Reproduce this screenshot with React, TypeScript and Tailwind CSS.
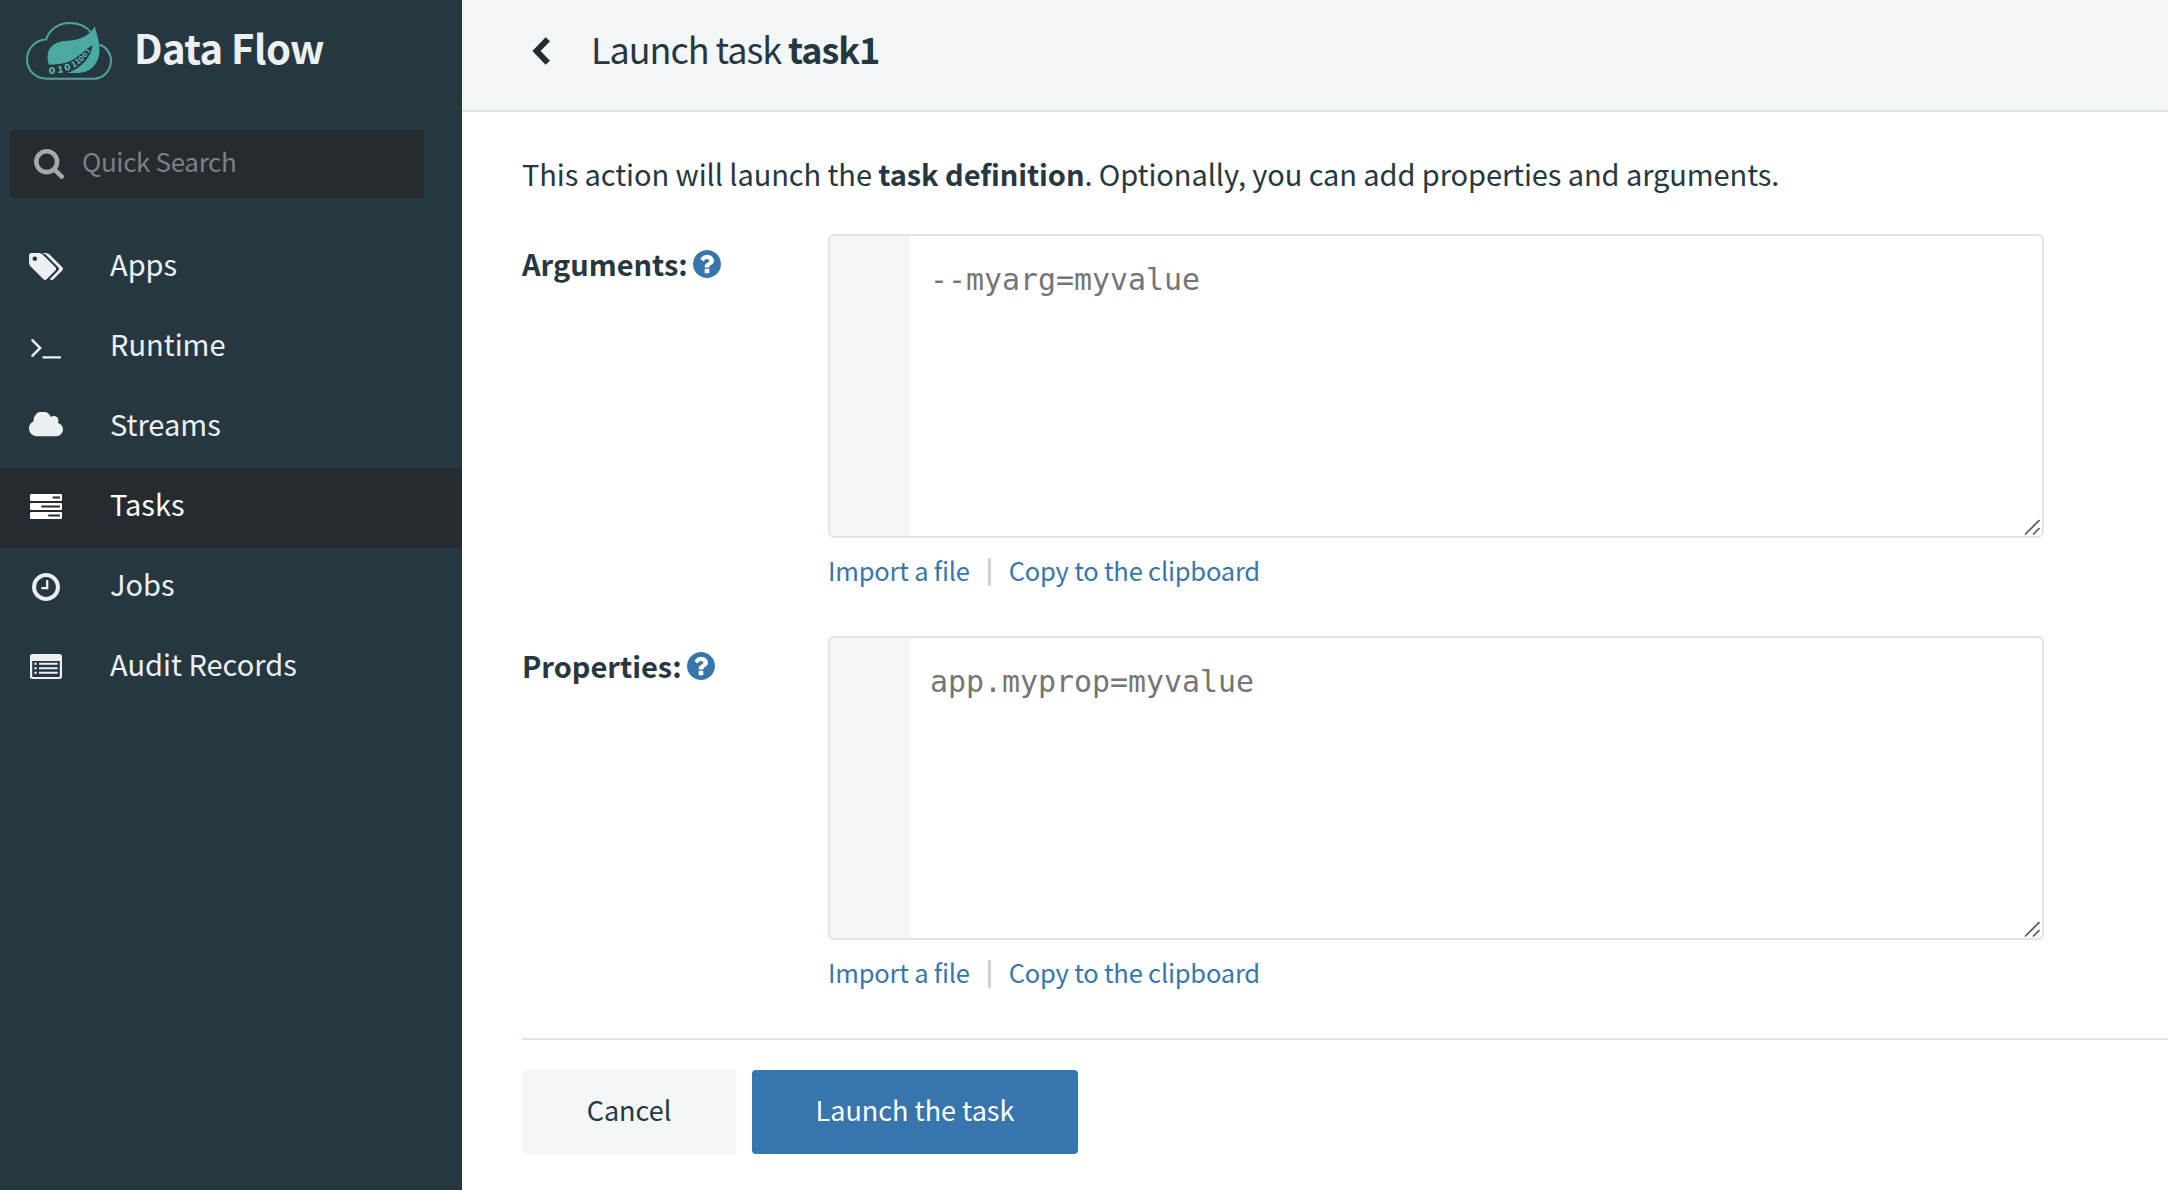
import React from "react";

const sans = "font-['Noto_Sans_CJK_SC','Source_Sans_Pro',sans-serif]";

type IconProps = { d: string; viewBox: string; className: string };

function Icon({ d, viewBox, className }: IconProps) {
  return (
    <svg viewBox={viewBox} className={className} fill="currentColor" fillRule="evenodd" aria-hidden="true">
      <path d={d} />
    </svg>
  );
}

const SEARCH =
  "M1152 704q0-185-131.500-316.500t-316.500-131.500-316.500 131.500-131.500 316.500 131.500 316.500 316.500 131.500 316.500-131.500 131.500-316.500zm512 832q0 52-38 90t-90 38q-54 0-90-38l-343-342q-179 124-399 124-143 0-273.500-55.500t-225-150-150-225-55.500-273.500 55.500-273.500 150-225 225-150 273.500-55.500 273.500 55.500 225 150 150 225 55.500 273.500q0 220-124 399l343 343q37 37 37 90z";
const TAGS =
  "M448 448q0-53-37.500-90.500t-90.500-37.500-90.500 37.500-37.500 90.500 37.500 90.500 90.500 37.500 90.500-37.500 37.500-90.500zm1067 576q0 53-37 90l-491 492q-39 37-91 37-53 0-90-37l-715-716q-38-37-64.500-101t-26.500-117v-416q0-52 38-90t90-38h416q53 0 117 26.500t102 64.500l715 714q37 39 37 91zm384 0q0 53-37 90l-491 492q-39 37-91 37-36 0-59-14t-53-45l470-470q37-37 37-90 0-52-37-91l-715-714q-38-38-102-64.500t-117-26.500h224q53 0 117 26.500t102 64.500l715 714q37 39 37 91z";
const TERMINAL =
  "M585 983l-466 466q-10 10-23 10t-23-10l-50-50q-10-10-10-23t10-23l393-393-393-393q-10-10-10-23t10-23l50-50q10-10 23-10t23 10l466 466q10 10 10 23t-10 23zm1079 457v64q0 14-9 23t-23 9h-960q-14 0-23-9t-9-23v-64q0-14 9-23t23-9h960q14 0 23 9t9 23z";
const CLOUD =
  "M1920 1152q0 159-112.500 271.500t-271.500 112.500h-1088q-185 0-316.500-131.500t-131.500-316.500q0-132 71-241.500t187-163.500q-2-28-2-43 0-212 150-362t362-150q158 0 286.500 88t187.500 230q70-62 166-62 106 0 181 75t75 181q0 75-41 138 129 30 213 134.500t84 239.500z";
const CLOCK =
  "M896 544v448q0 14-9 23t-23 9h-320q-14 0-23-9t-9-23v-64q0-14 9-23t23-9h224v-352q0-14 9-23t23-9h64q14 0 23 9t9 23zm416 352q0-148-73-273t-198-198-273-73-273 73-198 198-73 273 73 273 198 198 273 73 273-73 198-198 73-273zm224 0q0 209-103 385.500t-279.500 279.500-385.500 103-385.500-103-279.500-279.500-103-385.500 103-385.500 279.500-279.500 385.500-103 385.500 103 279.500 279.500 103 385.500z";
const QUESTION =
  "M896 1376v-192q0-14-9-23t-23-9h-192q-14 0-23 9t-9 23v192q0 14 9 23t23 9h192q14 0 23-9t9-23zm256-672q0-88-55.500-163t-138.500-116-170-41q-243 0-371 213-15 24 8 42l132 100q7 6 19 6 16 0 25-12 53-68 86-92 34-24 86-24 48 0 85.500 26t37.500 59q0 38-20 61t-68 45q-63 28-115.500 86.500t-52.500 125.500v36q0 14 9 23t23 9h192q14 0 23-9t9-23q0-19 21.500-49.500t54.500-49.500q32-18 49-28.500t46-35 44.500-48 28-60.500 12.500-81zm384 192q0 209-103 385.500t-279.500 279.500-385.500 103-385.500-103-279.500-279.500-103-385.500 103-385.500 279.500-279.500 385.500-103 385.500 103 279.500 279.500 103 385.500z";

function TasksIcon() {
  return (
    <svg viewBox="0 0 32 25" className="h-[25px] w-8" fill="currentColor" fillRule="evenodd">
      <path d="M1 0h30a1 1 0 0 1 1 1v5a1 1 0 0 1-1 1H1a1 1 0 0 1-1-1V1a1 1 0 0 1 1-1zM22.700 2.600h7.300v2h-7.300z" />
      <path d="M1 9h30a1 1 0 0 1 1 1v5a1 1 0 0 1-1 1H1a1 1 0 0 1-1-1v-5a1 1 0 0 1 1-1zM11.300 11.600H30v2H11.300z" />
      <path d="M1 18h30a1 1 0 0 1 1 1v5a1 1 0 0 1-1 1H1a1 1 0 0 1-1-1v-5a1 1 0 0 1 1-1zM18.300 20.600H30v2H18.300z" />
    </svg>
  );
}

function RecordsIcon() {
  return (
    <svg viewBox="0 0 32 25" className="h-[25px] w-8" fill="currentColor" fillRule="evenodd">
      <path d="M2.500 0h27A2.500 2.500 0 0 1 32 2.500v20a2.500 2.500 0 0 1-2.500 2.500h-27A2.500 2.500 0 0 1 0 22.500v-20A2.500 2.500 0 0 1 2.500 0zM2.200 7v15.200q0 .8.800.8h26q.8 0 .8-.8V7z" />
      <path d="M4.300 8.800h2.400v2H4.300zM4.300 13.200h2.400v2H4.300zM4.300 17.800h2.400v2H4.300zM9 8.800h18.600v2H9zM9 13.200h18.600v2H9zM9 17.800h18.600v2H9z" />
    </svg>
  );
}

const digits: [string, number, number, number, number][] = [
  ["0", 48.800, 73.800, 0, 9.500],
  ["1", 57.500, 73, -6, 9],
  ["0", 65, 71, -12, 9],
  ["1", 72.500, 68, -24, 8],
  ["1", 77, 65, -32, 7.500],
  ["0", 81, 62, -40, 7],
  ["0", 84.800, 58, -46, 6.500],
  ["1", 88, 53.500, -54, 5.500],
];

function Logo() {
  return (
    <svg viewBox="24 20 92 62" className="h-[62px] w-[92px] shrink-0" fill="none">
      <path
        d="M46.500 78.700C35.500 78.700 27 70 27 59.500 27 48.500 36 39.500 46 39.500 49.500 29 59 23 70 23 79 23 87 27 92 33.500M99.500 44.500C106.500 47 111 53.500 111 60.500 111 71 103 78.700 94 78.700H46.500"
        stroke="#50a39b"
        strokeWidth="2"
      />
      <path
        d="M94.700 26C96 33 99.500 39 99.500 50 99.500 64 90 73 77 73 72 73 68 73 64.500 72.500 80 69 91 58 92.500 45.500 86 50 82 55 74 59.500 66 64 58 64.500 49 64.800 47 60 47 53 49.500 49 54 42 62 41 70 40.500 82 39.500 91 34 94.700 26Z"
        fill="#4aa9a0"
      />
      <path d="M92.300 45.500C84 50 79 57 71 61 66 63.500 60 64.500 51 65L60 75 70 72C82 67 90 58 92.300 45.500Z" fill="#273740" />
      {digits.map(([c, x, y, r, s], i) => (
        <text
          key={i}
          transform={`translate(${x} ${y}) rotate(${r})`}
          fontSize={s}
          fill="#5dbbb0"
          fontFamily="DejaVu Sans"
          fontWeight="bold"
        >
          {c}
        </text>
      ))}
    </svg>
  );
}

const menu: { label: string; icon: React.ReactNode; active?: boolean }[] = [
  { label: "Apps", icon: <Icon d={TAGS} viewBox="0 128 1899 1515" className="mt-px h-[27px] w-[34px]" /> },
  { label: "Runtime", icon: <Icon d={TERMINAL} viewBox="13 494 1651 1042" className="mt-1.5 h-5 w-[30px]" /> },
  { label: "Streams", icon: <Icon d={CLOUD} viewBox="0 256 1920 1280" className="-mt-0.5 h-[26px] w-[34px]" /> },
  { label: "Tasks", icon: <TasksIcon />, active: true },
  { label: "Jobs", icon: <Icon d={CLOCK} viewBox="0 128 1536 1536" className="mt-0.5 size-7" /> },
  { label: "Audit Records", icon: <RecordsIcon /> },
];

function Sidebar() {
  return (
    <aside className="flex w-[462px] shrink-0 flex-col bg-[#273740] text-[#ecf0f3]">
      <div className="flex h-[130px] items-start pt-5 pl-6">
        <Logo />
        <span className="-mt-px ml-[18px] text-[40px] leading-[56px] font-bold tracking-[-0.6px] whitespace-nowrap">
          Data Flow
        </span>
      </div>
      <div className="mr-[38px] ml-2.5 flex h-[68px] items-center rounded bg-[#252b2f] pl-6">
        <Icon d={SEARCH} viewBox="0 0 1664 1664" className="h-[30px] w-[30px] text-[#a5a9ab]" />
        <span className="mb-2 ml-[18px] text-[26px] tracking-[-0.35px] text-[#7c8184]">Quick Search</span>
      </div>
      <nav className="mt-[30px] flex flex-col">
        {menu.map((m) => (
          <a
            key={m.label}
            className={m.active ? "flex h-20 items-center bg-[#252b2f] text-white" : "flex h-20 items-center"}
          >
            <span className="flex w-[92px] justify-center pb-1">{m.icon}</span>
            <span className="ml-[18px] pb-2 text-[29px] whitespace-nowrap">{m.label}</span>
          </a>
        ))}
      </nav>
    </aside>
  );
}

function Field({ label, placeholder }: { label: string; placeholder: string }) {
  return (
    <div className="flex h-[402px] items-start">
      <div className="flex w-[306px] shrink-0 items-center gap-[5px] pt-2.5">
        <span className="-mt-0.5 text-[29px] leading-[42px] font-bold">{label}</span>
        <Icon d={QUESTION} viewBox="0 128 1536 1536" className="size-7 text-[#3776ad]" />
      </div>
      <div>
        <div className="relative flex h-[304px] w-[1216px] overflow-hidden rounded-md border-2 border-[#dfe4e7]">
          <div className="w-20 bg-[#f3f6f7]" />
          <div className="pt-6 pl-5 font-['DejaVu_Sans_Mono',monospace] text-[29.900px] leading-10 text-[#757575]">
            {placeholder}
          </div>
          <svg viewBox="0 0 16 16" className="absolute right-0.5 bottom-px size-4" stroke="#55585a" strokeWidth="1.600">
            <path d="M1 15.500 15.500 1M9 15.500l6.500-6.500" />
          </svg>
        </div>
        <div className="mt-3 flex items-center text-[25.500px] leading-10 tracking-[-0.2px] whitespace-nowrap text-[#3776ad]">
          <a>Import a file</a>
          <span className="mx-[18px] mt-1 h-7 w-[3px] bg-[#cfd4d8]" />
          <a>Copy to the clipboard</a>
        </div>
      </div>
    </div>
  );
}

export default function App() {
  return (
    <div className={`${sans} flex h-[1190px] w-[2168px] overflow-hidden bg-white text-[#273740]`}>
      <Sidebar />
      <main className="flex flex-1 flex-col">
        <header className="flex h-28 items-start border-b-2 border-[#dfe4e7] bg-[#f3f6f7] pl-[70px]">
          <svg viewBox="0 0 18 28" className="mt-[37px] h-7 w-[18px]" fill="none" stroke="#252b2f" strokeWidth="6">
            <path d="M15.800 2.200 4.500 14l11.300 11.800" strokeLinejoin="miter" />
          </svg>
          <h1 className="mt-5 ml-[41px] text-[36px] leading-[56px] tracking-[-1.050px] whitespace-nowrap">
            Launch task <b>task1</b>
          </h1>
        </header>
        <section className="flex flex-col pl-[60px]">
          <p className="mt-[39px] h-[83px] text-[29px] leading-[44px] tracking-[-0.080px] whitespace-nowrap">
            This action will launch the <b>task definition</b>. Optionally, you can add properties and arguments.
          </p>
          <Field label="Arguments:" placeholder="--myarg=myvalue" />
          <Field label="Properties:" placeholder="app.myprop=myvalue" />
          <div className="flex gap-4 border-t-2 border-[#dfe4e7] pt-[30px] text-[27px]">
            <button className="h-[84px] w-[214px] rounded bg-[#f3f6f7] pb-[3px]">Cancel</button>
            <button className="h-[84px] w-[326px] rounded bg-[#3776ad] pb-[3px] text-white">Launch the task</button>
          </div>
        </section>
      </main>
    </div>
  );
}
